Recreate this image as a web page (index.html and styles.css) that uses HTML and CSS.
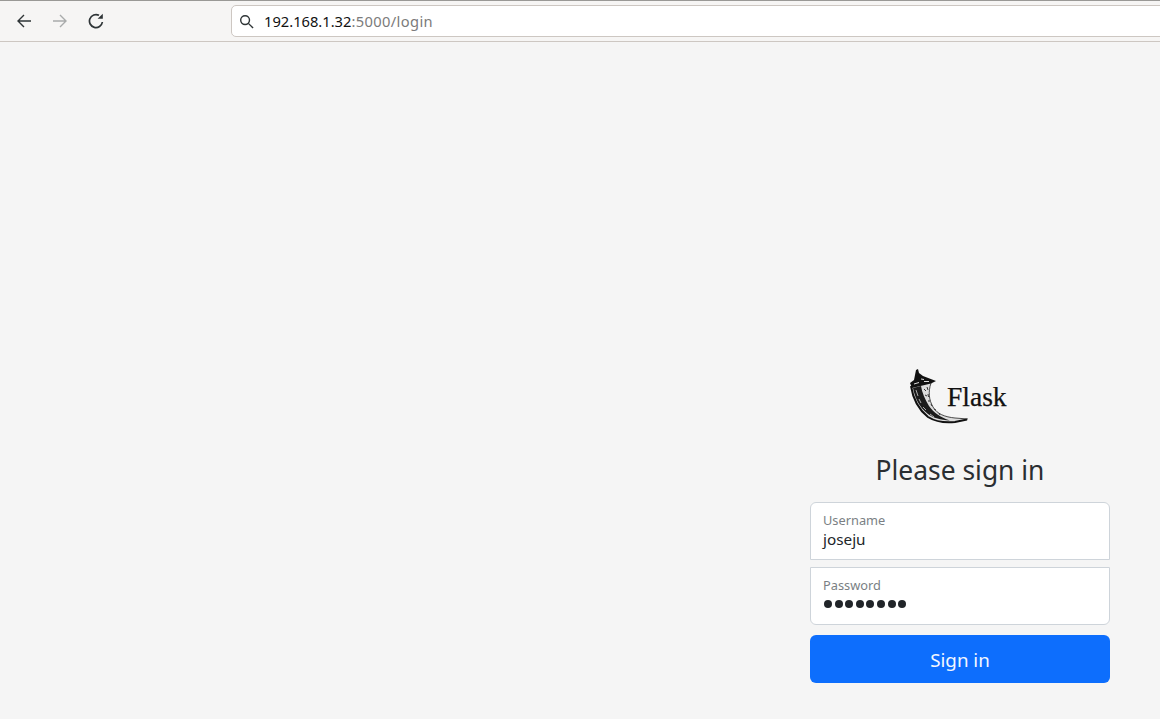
FILE: index.html
```html
<!DOCTYPE html>
<html lang="en">
<head>
<meta charset="utf-8">
<title>Please sign in</title>
<link rel="stylesheet" href="styles.css">
</head>
<body>
<header class="toolbar">
  <nav class="nav">
    <svg class="icon" viewBox="0 0 16 16"><path d="M15 8H2M8 2 2 8l6 6"/></svg>
    <svg class="icon dim" viewBox="0 0 16 16"><path d="M1 8h13M8 2l6 6-6 6"/></svg>
    <svg class="icon thick" viewBox="0 0 16 16"><path d="M14.400 9A6.500 6.500 0 1 1 11 2.300"/><path class="head" d="M9.600 5.800H14.800V.8Z"/></svg>
  </nav>
  <div class="urlbar">
    <svg class="search" viewBox="0 0 16 16"><circle cx="6.5" cy="6.5" r="4.7"/><path d="m10 10 5 5"/></svg>
    <span class="url"><span class="host">192.168.1.32</span><span class="tail">:5000/login</span></span>
  </div>
</header>
<main class="page">
  <form class="signin">
    <svg class="logo" viewBox="0 0 100 60" width="100" height="60">
      <path class="horn-body" d="M2 19C4 30 7 39 17 48 26 54 34 55 45 54L58 51 45 50C35 49 27 46 23 39 19 32 18 24 21 15Z"/>
      <path class="horn-edge" d="M1 18C3 31 8 41 18 49 26 54 35 55 45 54L57 51.500"/>
      <path class="horn-shade" d="M3 20C5 30 9 39 18 46 24 50 30 52 40 52.500 30 49 24 45 19 38 15 31 12 25 11 18Z"/>
      <path class="horn-thin" d="M21 15C18 24 19 32 23 39 27 46 35 49 45 50L58 51"/>
      <path class="horn-speck" d="M14 21 16 23M17 19 18 22M15 27 17 28M18 26 18.500 29M18 33 20 33M21 36 22 38M24 41 26 42M29 45 30 47"/>
      <path class="horn-light" d="M6 22 8 28M9 31 11 35M13 39 16 42M20 46 24 49"/>
      <path class="horn-collar" d="M0 15 4 12 5 7 6 2 8 1 9 5 13 8 26 13 21 15.500 2 20Z"/>
      <path class="horn-notch" d="M4 16 9 14.500M11 11 14 11.500M14 13.500 19 13.500"/>
      <text class="wordmark" x="37" y="38">Flask</text>
    </svg>
    <h1 class="title">Please sign in</h1>
    <div class="field first">
      <span class="label">Username</span>
      <span class="value">joseju</span>
    </div>
    <div class="field last">
      <span class="label">Password</span>
      <span class="dots"><i></i><i></i><i></i><i></i><i></i><i></i><i></i><i></i></span>
    </div>
    <button class="submit" type="button">Sign in</button>
  </form>
</main>
</body>
</html>
```
FILE: styles.css
```css
* { box-sizing: border-box; }
html, body { margin: 0; height: 719px; overflow: hidden; }
body {
  background: #f5f5f5;
  font-family: "Noto Sans", sans-serif;
  color: #212529;
  display: flex;
  flex-direction: column;
}
.toolbar {
  height: 42px;
  flex: none;
  background: #f6f5f4;
  border-top: 1px solid #9a9996;
  border-bottom: 1px solid #cdc7c2;
  display: flex;
  align-items: center;
  padding: 0 0 0 16px;
}
.nav { display: flex; gap: 20px; width: 215px; flex: none; }
.icon { width: 16px; height: 16px; fill: none; stroke: #2e3436; stroke-width: 1.4; }
.icon.dim { stroke: #a9abab; }
.icon.thick { stroke-width: 1.7; }
.icon .head { fill: #2e3436; stroke: none; }
.urlbar {
  flex: 1;
  height: 32px;
  margin-right: -6px;
  background: #fff;
  border: 1px solid #cdc7c2;
  border-radius: 5px;
  display: flex;
  align-items: center;
  padding-left: 7px;
  gap: 10px;
}
.search { width: 15px; height: 15px; fill: none; stroke: #2e3436; stroke-width: 1.5; }
.url { font-size: 14.7px; color: #7b7b7b; }
.host { color: #111; }
.tail { letter-spacing: .36px; }
.page {
  flex: 1;
  display: flex;
  justify-content: flex-end;
  align-items: flex-end;
  padding: 0 50px 36px 0;
}
.signin { width: 300px; display: flex; flex-direction: column; align-items: center; }
.logo { margin-bottom: 25px; overflow: visible; }
.horn-body { fill: #dcdcdc; }
.horn-edge { fill: none; stroke: #111; stroke-width: 2; }
.horn-shade { fill: #1c1c1c; }
.horn-thin { fill: none; stroke: #222; stroke-width: .8; }
.horn-speck { fill: none; stroke: #333; stroke-width: 1; }
.horn-light { fill: none; stroke: #bdbdbd; stroke-width: .9; }
.horn-collar { fill: #111; }
.horn-notch { fill: none; stroke: #f5f5f5; stroke-width: .9; }
.wordmark { font-family: "Liberation Serif", serif; font-size: 27.5px; fill: #111; stroke: #111; stroke-width: .25; }
.title { font-size: 26.4px; font-weight: 400; line-height: 34px; margin: 0 0 15px; color: #2a2e32; }
.field {
  width: 100%;
  height: 58px;
  background: #fff;
  border: 1px solid #ced4da;
  padding: 9px 12px 0;
  display: flex;
  flex-direction: column;
}
.field.first { border-radius: 6px 6px 0 0; margin-bottom: 7px; }
.field.last { border-radius: 0 0 6px 6px; margin-bottom: 10px; }
.label { font-size: 12.8px; line-height: 17px; color: #7a7f84; }
.value { font-size: 15.3px; line-height: 20px; }
.dots { display: flex; gap: 2.6px; margin-top: 6px; padding-left: 1px; }
.dots i { width: 8px; height: 8px; border-radius: 50%; background: #212529; }
.submit {
  width: 100%;
  height: 48px;
  border: 0;
  padding: 2px 0 0;
  border-radius: 6px;
  background: #0d6efd;
  color: #f2f7ff;
  font: 400 18.8px "Noto Sans", sans-serif;
}
```
